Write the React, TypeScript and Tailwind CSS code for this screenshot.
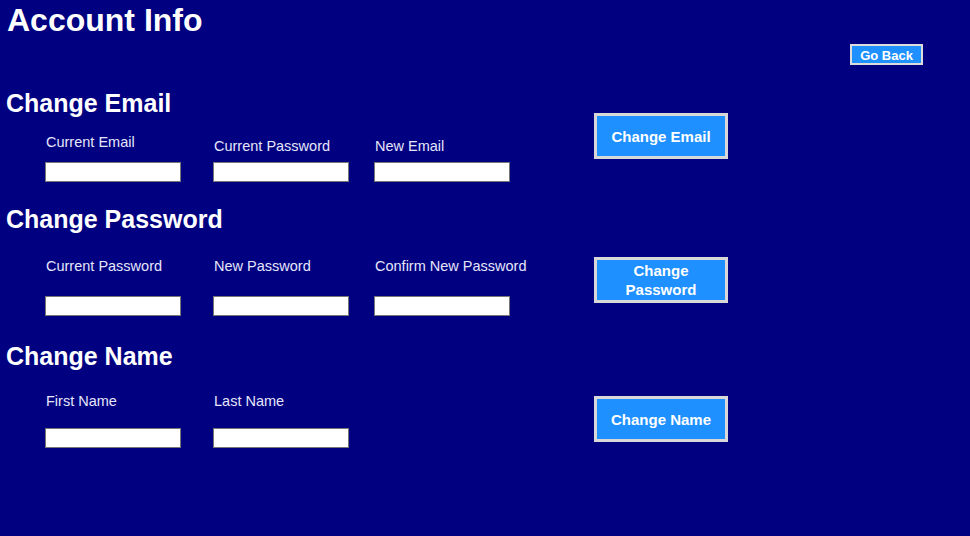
import React from 'react';

type Field = { label: string; offset?: boolean };

const fieldLeft = ['ml-0', 'ml-[32px]', 'ml-[25px]'];

function FieldRow({ fields, height }: { fields: Field[]; height: string }) {
  return (
    <div className="flex pl-[45px]">
      {fields.map((field, i) => (
        <div key={field.label} className={`flex flex-col justify-between w-[136px] ${height} ${fieldLeft[i]}`}>
          <label className={`block text-[14.5px] leading-[16px] text-[#e6e6fa] pl-px whitespace-nowrap ${field.offset ? 'mt-[4px]' : ''}`}>
            {field.label}
          </label>
          <input
            type="text"
            className="block w-[136px] h-[20px] bg-white border border-[#767676] text-black text-[13px] px-1 outline-none"
          />
        </div>
      ))}
    </div>
  );
}

function ActionButton({ children }: { children: React.ReactNode }) {
  return (
    <button className="w-[134px] h-[46px] bg-[#1e90ff] border-[3px] border-[#d8d8d8] text-white font-bold text-[15px] leading-[19px] px-2 cursor-pointer">
      {children}
    </button>
  );
}

export default function App() {
  return (
    <div className="min-h-screen bg-[#000080] text-white font-['Liberation_Sans',Arial,sans-serif]">
      <h1 className="pt-[2px] pl-[7px] text-[32px] leading-[36px] font-bold">Account Info</h1>

      <div className="flex justify-end pr-[47px] mt-[6px]">
        <button className="w-[73px] h-[21px] bg-[#1e90ff] border-2 border-[#dcdcdc] text-white font-bold text-[13px] leading-[15px] pt-[2px] cursor-pointer">
          Go Back
        </button>
      </div>

      {/* Change Email */}
      <section className="flex mt-[24px]">
        <div className="w-[594px]">
          <h2 className="pl-[6px] text-[25px] leading-[28px] font-bold">Change Email</h2>
          <div className="mt-[17px]">
            <FieldRow
              height="h-[48px]"
              fields={[
                { label: 'Current Email' },
                { label: 'Current Password', offset: true },
                { label: 'New Email', offset: true },
              ]}
            />
          </div>
        </div>
        <div className="mt-[24px]">
          <ActionButton>Change Email</ActionButton>
        </div>
      </section>

      {/* Change Password */}
      <section className="flex mt-[23px]">
        <div className="w-[594px]">
          <h2 className="pl-[6px] text-[25px] leading-[28px] font-bold">Change Password</h2>
          <div className="mt-[25px]">
            <FieldRow
              height="h-[58px]"
              fields={[
                { label: 'Current Password' },
                { label: 'New Password' },
                { label: 'Confirm New Password' },
              ]}
            />
          </div>
        </div>
        <div className="mt-[52px]">
          <ActionButton>Change Password</ActionButton>
        </div>
      </section>

      {/* Change Name */}
      <section className="flex mt-[26px]">
        <div className="w-[594px]">
          <h2 className="pl-[6px] text-[25px] leading-[28px] font-bold">Change Name</h2>
          <div className="mt-[23px]">
            <FieldRow
              height="h-[55px]"
              fields={[{ label: 'First Name' }, { label: 'Last Name' }]}
            />
          </div>
        </div>
        <div className="mt-[54px]">
          <ActionButton>Change Name</ActionButton>
        </div>
      </section>
    </div>
  );
}
